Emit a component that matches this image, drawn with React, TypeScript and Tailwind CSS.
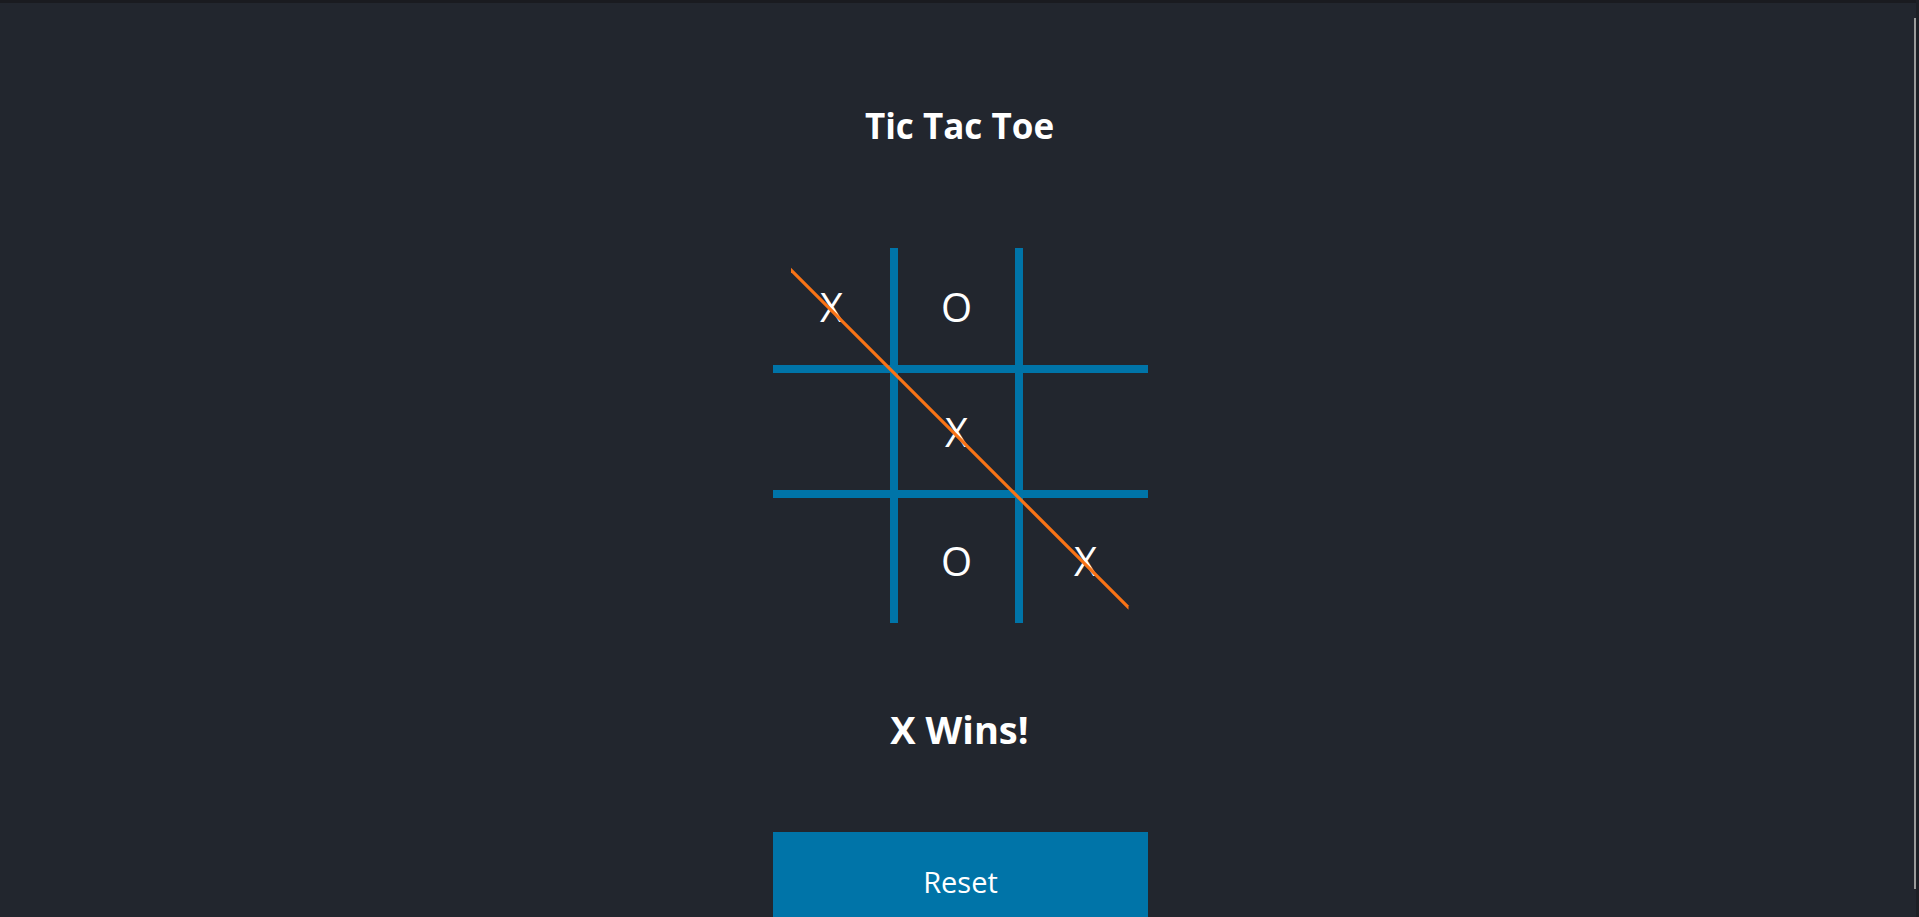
import React from "react";

const cells = ["X", "O", "", "", "X", "", "", "O", "X"];

export default function App() {
  return (
    <div
      className="relative h-[917px] w-full overflow-hidden border-t-[3px] border-[#1a1b20] bg-[#22262e] text-white"
      style={{ fontFamily: '"Open Sans", "Noto Sans", sans-serif' }}
    >
      <div className="flex flex-col items-center">
        <h1 className="mt-[103px] h-[40px] text-[35px] font-bold leading-[40px]">Tic Tac Toe</h1>

        <div className="relative ml-[2px] mt-[102px] grid h-[375px] w-[375px] grid-cols-3 grid-rows-3">
          {cells.map((c, i) => (
            <div
              key={i}
              className={`flex items-center justify-center text-[40px] leading-[48px] ${
                i % 3 !== 2 ? "border-r-[8px] border-[#0074a8]" : ""
              } ${i < 6 ? "border-b-[8px] border-[#0074a8]" : ""}`}
            >
              {c}
            </div>
          ))}
          <svg
            className="pointer-events-none absolute left-0 top-0"
            width="375"
            height="375"
            viewBox="0 0 375 375"
          >
            <polygon points="18,19.7 355.5,357.2 355.5,361.8 18,24.3" fill="#f97316" />
          </svg>
        </div>

        <h2 className="mt-[84px] h-[44px] text-[38px] font-bold leading-[44px]">X Wins!</h2>

        <button className="ml-[2px] mt-[81px] flex h-[100px] w-[375px] shrink-0 items-center justify-center bg-[#0074a8] text-[29px] text-white">
          Reset
        </button>
      </div>

      <div className="pointer-events-none fixed right-0 top-0 h-full w-[3px] bg-[#1d1f25]" />
      <div className="pointer-events-none fixed right-[3px] top-[18px] h-[871px] w-[2px] bg-[#9b9b9b]" />
    </div>
  );
}
